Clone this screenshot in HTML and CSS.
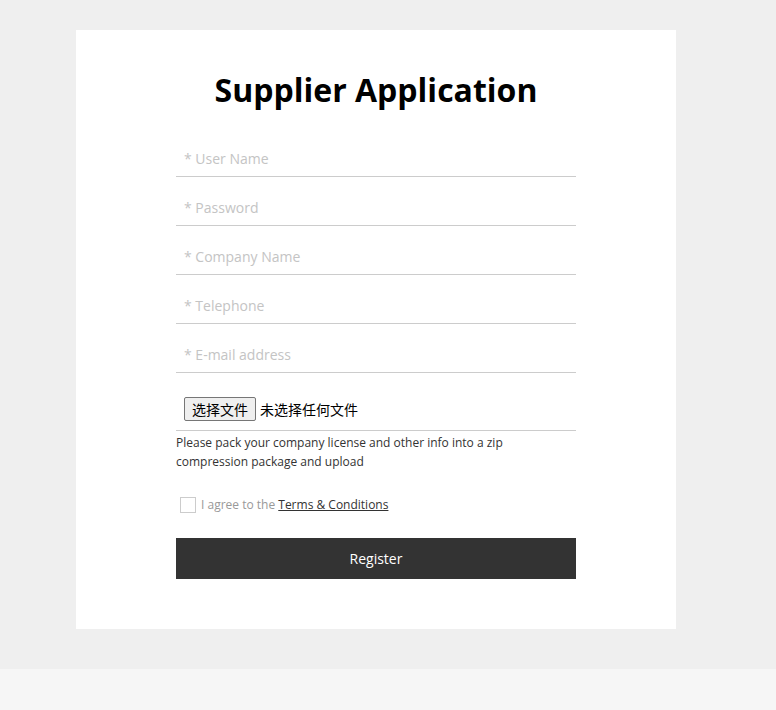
FILE: index.html
```html
<!DOCTYPE html>
<html lang="en">
<head>
<meta charset="utf-8">
<title>Supplier Application</title>
<link rel="stylesheet" href="styles.css">
</head>
<body>
<main class="page">
  <section class="card">
    <h1 class="title">Supplier Application</h1>
    <form class="form">
      <input class="field" type="text" placeholder="* User Name">
      <input class="field" type="password" placeholder="* Password">
      <input class="field" type="text" placeholder="* Company Name">
      <input class="field" type="text" placeholder="* Telephone">
      <input class="field" type="text" placeholder="* E-mail address">
      <div class="file-row">
        <button type="button" class="file-btn">选择文件</button>
        <span class="file-name">未选择任何文件</span>
      </div>
      <p class="hint">Please pack your company license and other info into a zip<br>compression package and upload</p>
      <label class="agree">
        <input class="check" type="checkbox">
        <span class="agree-text">I agree to the <a class="terms" href="#">Terms &amp; Conditions</a></span>
      </label>
      <button type="button" class="register">Register</button>
    </form>
  </section>
</main>
<footer class="footer"></footer>
</body>
</html>
```

FILE: styles.css
```css
html, body {
  margin: 0;
  padding: 0;
}
body {
  background: #f6f6f6;
  font-family: "Open Sans", "Liberation Sans", sans-serif;
  color: #333;
}
.page {
  background: #efefef;
  padding: 30px 0 40px 76px;
}
.card {
  width: 600px;
  box-sizing: border-box;
  background: #fff;
  padding: 38px 100px 50px;
}
.title {
  margin: 0 0 17px;
  font-size: 32px;
  font-weight: 700;
  line-height: normal;
  text-align: center;
  color: #000;
}
.form {
  display: flex;
  flex-direction: column;
}
.field {
  display: block;
  box-sizing: border-box;
  width: 100%;
  height: 42px;
  margin: 7px 0 0;
  padding: 6px 8px 0;
  border: none;
  border-bottom: 1px solid #ccc;
  outline: none;
  font-family: "Open Sans", "Liberation Sans", sans-serif;
  font-size: 14px;
  color: #333;
  background: #fff;
}
.field::placeholder {
  color: #c4c4c4;
}
.file-row {
  display: flex;
  align-items: center;
  gap: 4px;
  padding: 24px 8px 9px;
  border-bottom: 1px solid #ccc;
  font-family: "Noto Sans CJK SC", "Microsoft YaHei", sans-serif;
  font-size: 14px;
  color: #000;
}
.file-btn {
  box-sizing: border-box;
  height: 24px;
  padding: 0 7px;
  border: 1px solid #767676;
  border-radius: 2px;
  background: #efefef;
  font-family: "Noto Sans CJK SC", sans-serif;
  font-size: 14px;
  line-height: 20px;
  color: #000;
}
.file-name {
  line-height: 20px;
}
.hint {
  margin: 2px 0 0;
  font-size: 12px;
  line-height: 19px;
  color: #333;
}
.agree {
  display: flex;
  align-items: center;
  gap: 5px;
  margin: 25px 0 0 4px;
  font-size: 12px;
  color: #999;
}
.check {
  appearance: none;
  -webkit-appearance: none;
  width: 16px;
  height: 16px;
  margin: 0;
  border: 1px solid #ccc;
  background: #fff;
}
.terms {
  color: #333;
  text-decoration: underline;
}
.register {
  margin-top: 25px;
  height: 41px;
  width: 100%;
  border: none;
  background: #333;
  color: #fff;
  font-family: "Open Sans", "Liberation Sans", sans-serif;
  font-size: 14px;
  cursor: pointer;
}
.footer {
  height: 41px;
  background: #f6f6f6;
}
```
